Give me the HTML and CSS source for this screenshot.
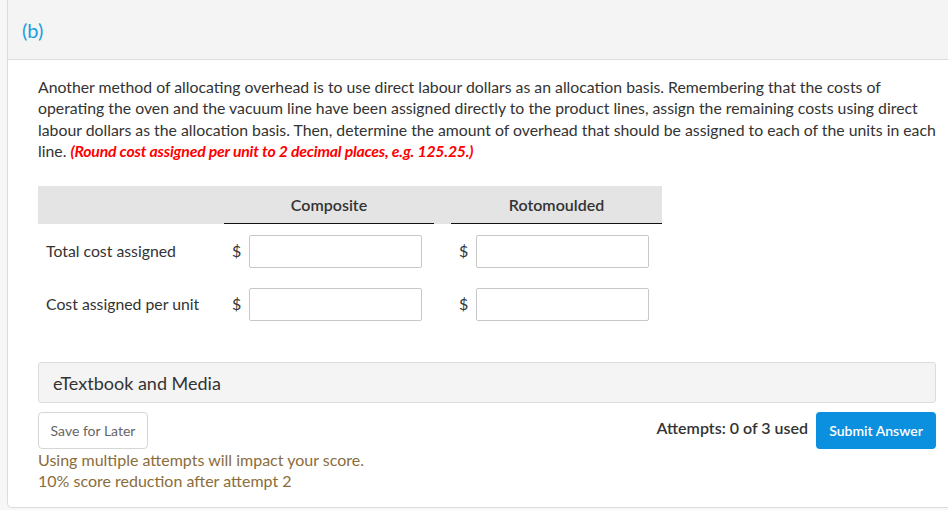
FILE: index.html
```html
<!DOCTYPE html>
<html>
<head>
<meta charset="utf-8">
<link rel="stylesheet" href="styles.css">
</head>
<body>
<div class="card">
  <div class="card-head"><span class="part">(b)</span></div>
  <div class="card-body">
    <p class="question">Another method of allocating overhead is to use direct labour dollars as an allocation basis. Remembering that the costs of operating the oven and the vacuum line have been assigned directly to the product lines, assign the remaining costs using direct labour dollars as the allocation basis. Then, determine the amount of overhead that should be assigned to each of the units in each line. <em class="note">(Round cost assigned per unit to 2 decimal places, e.g. 125.25.)</em></p>

    <div class="grid">
      <div class="hband"></div>
      <div class="hcell c1"><span>Composite</span></div>
      <div class="hcell c2"><span>Rotomoulded</span></div>

      <div class="label r1">Total cost assigned</div>
      <div class="cell c1 r1"><span class="dollar">$</span><input class="box" type="text"></div>
      <div class="cell c2 r1"><span class="dollar">$</span><input class="box" type="text"></div>

      <div class="label r2">Cost assigned per unit</div>
      <div class="cell c1 r2"><span class="dollar">$</span><input class="box" type="text"></div>
      <div class="cell c2 r2"><span class="dollar">$</span><input class="box" type="text"></div>
    </div>

    <div class="media">eTextbook and Media</div>

    <div class="actions">
      <div class="left">
        <button class="save">Save for Later</button>
        <div class="warn">Using multiple attempts will impact your score.<br>10% score reduction after attempt 2</div>
      </div>
      <div class="right">
        <span class="attempts">Attempts: 0 of 3 used</span>
        <button class="submit">Submit Answer</button>
      </div>
    </div>
  </div>
</div>
</body>
</html>
```

FILE: styles.css
```css
html, body {
  margin: 0;
  padding: 0;
}
body {
  background: #f7f7f7;
  font-family: Lato, "Noto Sans", sans-serif;
  color: #333;
  overflow: hidden;
  width: 948px;
  height: 510px;
}
.card {
  margin-left: 7px;
  width: 960px;
  height: 508px;
  box-sizing: border-box;
  background: #fff;
  border: 1px solid #dcdcdc;
  border-top: none;
  border-radius: 0 0 5px 5px;
}
.card-head {
  height: 59px;
  background: #f4f4f4;
  border-bottom: 1px solid #dcdcdc;
  display: flex;
  align-items: center;
  padding-left: 14px;
}
.part {
  color: #1b9ee0;
  font-size: 20px;
  margin-top: 1px;
}
.card-body {
  padding: 16px 0 0 30px;
  width: 898px;
}
.question {
  margin: 0;
  font-size: 15.8px;
  line-height: 21.3px;
  color: #333;
}
.note {
  color: #f00;
  font-weight: bold;
  font-style: italic;
  letter-spacing: -0.2px;
}
.grid {
  margin-top: 25px;
  display: grid;
  grid-template-columns: 186px 210px 17px 211px;
  grid-template-rows: 38px 44px 53px;
  width: 624px;
}
.hband {
  grid-column: 1 / 5;
  grid-row: 1;
  background: #e4e4e4;
}
.hcell {
  grid-row: 1;
  display: flex;
  align-items: center;
  justify-content: center;
  border-bottom: 1px solid #111;
  font-size: 16px;
  color: #333;
  font-weight: 600;
}
.hcell.c1 { grid-column: 2; }
.hcell.c2 { grid-column: 4; }
.label {
  grid-column: 1;
  display: flex;
  align-items: flex-end;
  padding-left: 8px;
  padding-bottom: 8px;
  font-size: 15.8px;
  color: #333;
}
.label.r1 { grid-row: 2; }
.label.r2 { grid-row: 3; }
.cell {
  display: flex;
  align-items: flex-end;
  padding-left: 8px;
}
.cell.c1 { grid-column: 2; }
.cell.c2 { grid-column: 4; }
.cell.r1 { grid-row: 2; }
.cell.r2 { grid-row: 3; }
.dollar {
  font-size: 16px;
  width: 17px;
  color: #333;
  padding-bottom: 8px;
}
.box {
  width: 173px;
  height: 33px;
  box-sizing: border-box;
  border: 1px solid #c8c8c8;
  border-radius: 2px;
  margin: 0;
  padding: 0 6px;
  font-family: inherit;
  font-size: 16px;
  background: #fff;
}
.media {
  margin-top: 41px;
  height: 41px;
  box-sizing: border-box;
  background: #f4f4f4;
  border: 1px solid #dcdcdc;
  border-radius: 3px;
  display: flex;
  align-items: center;
  padding-left: 14px;
  font-size: 18px;
  color: #333;
}
.actions {
  margin-top: 9px;
  display: flex;
  justify-content: space-between;
  align-items: flex-start;
}
.left {
  display: flex;
  flex-direction: column;
  align-items: flex-start;
}
.save {
  height: 37px;
  width: 110px;
  background: #fff;
  border: 1px solid #d6d6d6;
  border-radius: 4px;
  font-family: inherit;
  font-size: 14px;
  color: #666;
  padding: 0;
}
.warn {
  margin-top: 0;
  color: #8a6d3b;
  font-size: 16px;
  line-height: 21px;
}
.right {
  display: flex;
  align-items: flex-start;
}
.attempts {
  font-size: 16px;
  font-weight: 600;
  color: #333;
  margin-top: 6px;
  margin-right: 8px;
}
.submit {
  height: 37px;
  width: 120px;
  background: #0b8fdf;
  border: none;
  border-radius: 4px;
  color: #fff;
  font-family: inherit;
  font-size: 14px;
  font-weight: 600;
  padding: 0;
}
```
